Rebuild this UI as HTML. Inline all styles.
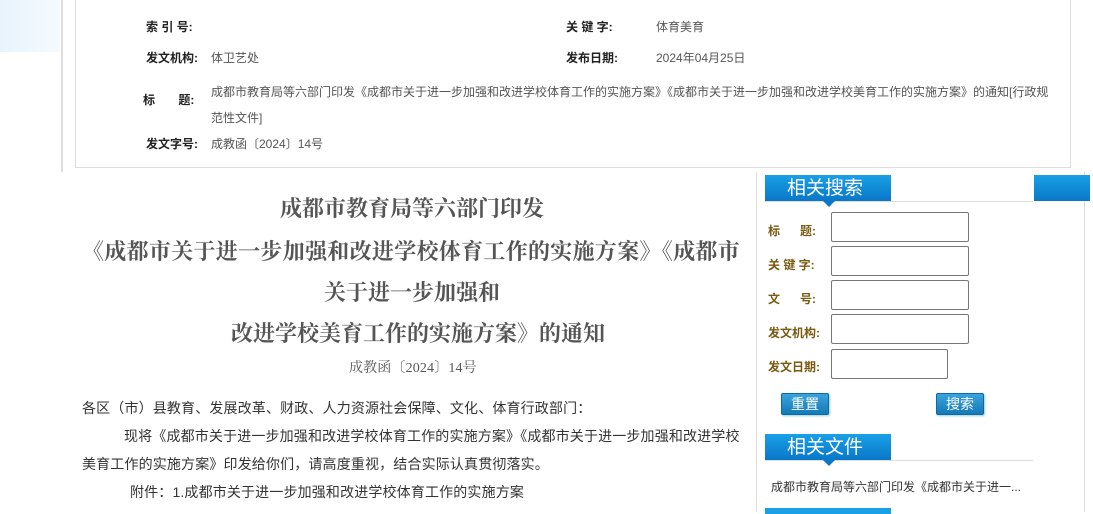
<!DOCTYPE html>
<html><head><meta charset="utf-8"><style>
body{margin:0;width:1093px;height:512px;overflow:hidden;background:#fff;font-family:"Liberation Sans","Noto Sans CJK SC",sans-serif;position:relative}
.a{position:absolute;white-space:nowrap}
.lab{font-size:12px;font-weight:bold;color:#222}
.val{font-size:12px;color:#555}
.t{font-family:"Liberation Serif","Noto Serif CJK SC",serif;font-weight:bold;font-size:22px;color:#555;text-align:center;width:680px;left:72px}
.b{font-size:14px;color:#333;letter-spacing:0.15px}
.tab{position:absolute;left:765px;width:126px;height:26px;background:linear-gradient(#19a0e6,#0a77c8);color:#fff;font-size:19px;line-height:28px;padding-left:22px;box-sizing:border-box}
.tab:after{content:"";position:absolute;left:58px;bottom:-6px;border:6px solid transparent;border-top-color:#0a77c8;border-bottom:0}
.sl{font-size:12px;font-weight:bold;color:#7a5a10}
.in{position:absolute;left:831px;width:138px;height:30px;border:1px solid #777;border-radius:2px;box-sizing:border-box}
.btn{position:absolute;width:46px;height:20px;background:linear-gradient(#3aa3dc,#1379b8);border:1px solid #0f6aa3;border-radius:2px;color:#fff;font-size:14px;text-align:center;line-height:20px;box-shadow:1px 1px 2px #9cc}
</style></head><body>
<div class="a" style="left:0;top:0;width:60px;height:52px;background:linear-gradient(90deg,#e8f3fc,#f6fbff)"></div>
<div class="a" style="left:61px;top:0;width:2px;height:172px;background:#ddd"></div>
<div class="a" style="left:75px;top:-1px;width:994px;height:167px;border:1px solid #ddd"></div>
<div class="a lab" style="left:146px;top:18px">索 引 号:</div>
<div class="a lab" style="left:566px;top:18px">关 键 字:</div>
<div class="a val" style="left:656px;top:18px">体育美育</div>
<div class="a lab" style="left:146px;top:49px">发文机构:</div>
<div class="a val" style="left:211px;top:49px">体卫艺处</div>
<div class="a lab" style="left:566px;top:49px">发布日期:</div>
<div class="a val" style="left:656px;top:49px">2024年04月25日</div>
<div class="a lab" style="left:143px;top:91px">标&nbsp;&nbsp;&nbsp;&nbsp;&nbsp;&nbsp;&nbsp;题:</div>
<div class="a val" style="left:211px;top:79px;line-height:26px;white-space:normal;width:848px">成都市教育局等六部门印发《成都市关于进一步加强和改进学校体育工作的实施方案》《成都市关于进一步加强和改进学校美育工作的实施方案》的通知[行政规<br>范性文件]</div>
<div class="a lab" style="left:146px;top:135px">发文字号:</div>
<div class="a val" style="left:211px;top:135px">成教函〔2024〕14号</div>

<div class="a t" style="top:192px">成都市教育局等六部门印发</div>
<div class="a t" style="top:235px;left:82px;width:680px;text-align:left;letter-spacing:0.3px">《成都市关于进一步加强和改进学校体育工作的实施方案》《成都市</div>
<div class="a t" style="top:276px">关于进一步加强和</div>
<div class="a t" style="top:317px;left:78px">改进学校美育工作的实施方案》的通知</div>
<div class="a b" style="left:349px;top:357px;font-family:'Liberation Serif','Noto Serif CJK SC',serif;color:#555">成教函〔2024〕14号</div>
<div class="a b" style="left:82px;top:398px">各区（市）县教育、发展改革、财政、人力资源社会保障、文化、体育行政部门：</div>
<div class="a b" style="left:124px;top:426px">现将《成都市关于进一步加强和改进学校体育工作的实施方案》《成都市关于进一步加强和改进学校</div>
<div class="a b" style="left:82px;top:454px">美育工作的实施方案》印发给你们，请高度重视，结合实际认真贯彻落实。</div>
<div class="a b" style="left:130px;top:482px">附件：1.成都市关于进一步加强和改进学校体育工作的实施方案</div>

<div class="a" style="left:756px;top:172px;width:1px;height:340px;background:#ddd"></div>
<div class="a" style="left:1084px;top:172px;width:1px;height:340px;background:#ddd"></div>
<div class="a" style="left:765px;top:201px;width:268px;height:1px;background:#ddd"></div>
<div class="tab" style="top:175px">相关搜索</div>
<div class="a" style="left:1034px;top:175px;width:56px;height:26px;background:linear-gradient(#19a0e6,#0a77c8)"></div>
<div class="a sl" style="left:768px;top:222px">标&nbsp;&nbsp;&nbsp;&nbsp;&nbsp;&nbsp;题:</div>
<div class="a sl" style="left:768px;top:256px">关 键 字:</div>
<div class="a sl" style="left:768px;top:290px">文&nbsp;&nbsp;&nbsp;&nbsp;&nbsp;&nbsp;号:</div>
<div class="a sl" style="left:768px;top:324px">发文机构:</div>
<div class="a sl" style="left:768px;top:358px">发文日期:</div>
<div class="in" style="top:212px"></div>
<div class="in" style="top:246px"></div>
<div class="in" style="top:280px"></div>
<div class="in" style="top:314px"></div>
<div class="in" style="top:349px;width:117px"></div>
<div class="btn" style="left:781px;top:393px">重置</div>
<div class="btn" style="left:936px;top:393px">搜索</div>
<div class="a" style="left:765px;top:460px;width:268px;height:1px;background:#ddd"></div>
<div class="tab" style="top:434px">相关文件</div>
<div class="a" style="left:771px;top:478px;font-size:12px;color:#333">成都市教育局等六部门印发《成都市关于进一...</div>
<div class="a" style="left:765px;top:508px;width:126px;height:6px;background:#19a0e6"></div>
</body></html>
